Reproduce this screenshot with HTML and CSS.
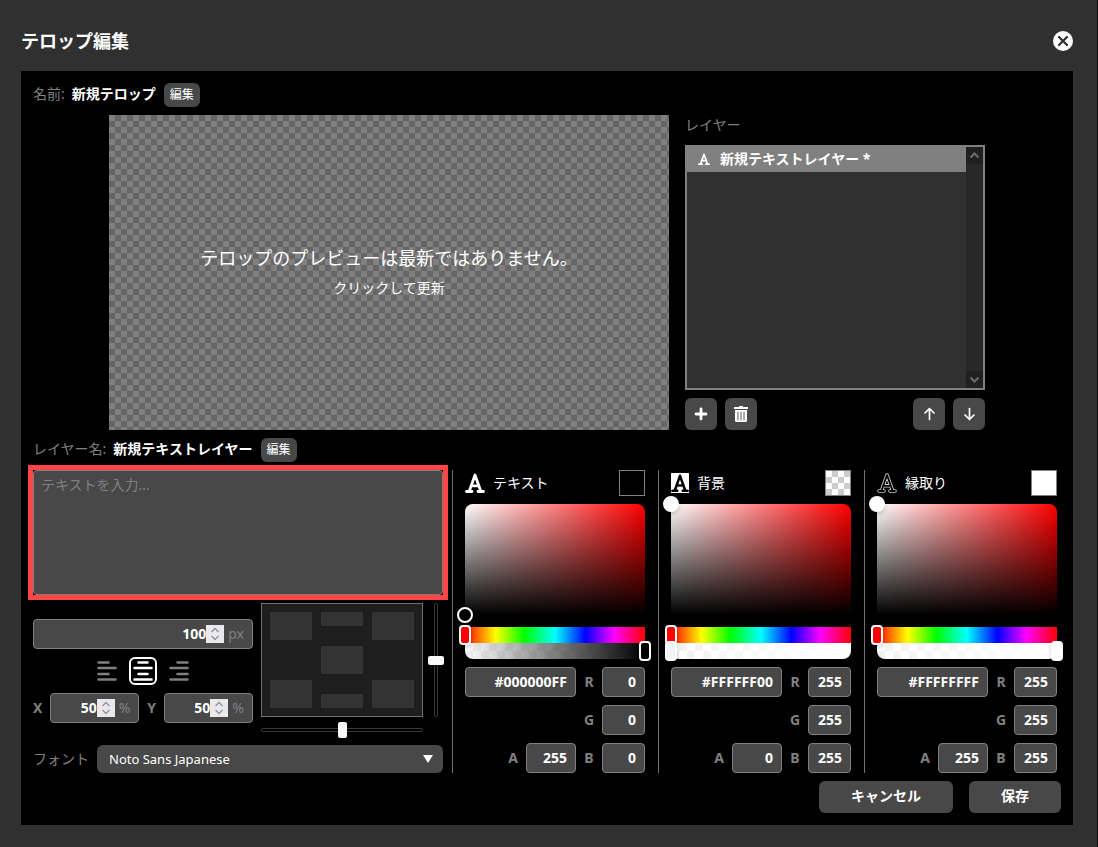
FILE: index.html
```html
<!DOCTYPE html>
<html lang="ja">
<head>
<meta charset="utf-8">
<meta name="viewport" content="width=device-width, initial-scale=1">
<title>テロップ編集</title>
<link rel="stylesheet" href="styles.css">
</head>
<body>
<svg class="defs" aria-hidden="true">
  <symbol id="letter" viewBox="0 0 20 20"><path d="M4.500 17.500 10 2 15.500 17.500M6 12.800h8M1.500 18.500h5.500M13 18.500h5.500" fill="none" stroke="currentColor" stroke-width="2.800" stroke-linecap="round" stroke-linejoin="round"/></symbol>
  <symbol id="letter-outline" viewBox="0 0 20 20"><g fill="none" stroke-linecap="round" stroke-linejoin="round"><path d="M4.500 17.500 10 2 15.500 17.500M6 12.800h8M2 18h5M13 18h5" stroke="#ccc" stroke-width="3.600"/><path d="M4.500 17.500 10 2 15.500 17.500M6 12.800h8M2 18h5M13 18h5" stroke="#000" stroke-width="1.800"/></g></symbol>
  <symbol id="spin" viewBox="0 0 18 18"><path d="M5.500 7 9 3.500 12.500 7M5.500 11 9 14.500 12.500 11" fill="none" stroke="#8f8f9d" stroke-width="1.300"/></symbol>
</svg>
<main class="dialog">
  <header class="dialog-head">
    <h1>テロップ編集</h1>
    <button class="close" aria-label="閉じる"><svg viewBox="0 0 20 20"><circle cx="10" cy="10" r="10" fill="#fff"/><path d="M6 6l8 8M14 6l-8 8" stroke="#303030" stroke-width="2.200" stroke-linecap="round"/></svg></button>
  </header>
  <div class="panel">
    <div class="name-row"><span class="muted">名前:</span><strong>新規テロップ</strong><button class="edit">編集</button></div>
    <section class="stage">
      <button class="preview"><span class="preview-title">テロップのプレビューは最新ではありません。</span><span>クリックして更新</span></button>
      <div class="layers">
        <h2 class="muted">レイヤー</h2>
        <div class="layer-list">
          <ul><li><svg class="layer-icon"><use href="#letter"/></svg>新規テキストレイヤー *</li></ul>
          <div class="scrollbar">
            <button aria-label="上へスクロール"><svg viewBox="0 0 17 17"><path d="M4.500 10.500l4-4 4 4"/></svg></button>
            <button aria-label="下へスクロール"><svg viewBox="0 0 17 17"><path d="M4.500 6.500l4 4 4-4"/></svg></button>
          </div>
        </div>
        <div class="layer-tools">
          <button aria-label="追加"><svg viewBox="0 0 32 32"><path d="M16 11v10M11 16h10" stroke-width="2.800"/></svg></button>
          <button aria-label="削除"><svg viewBox="0 0 32 32"><path d="M9 10h14M14 9h4" stroke-width="2" stroke-linecap="butt"/><path d="M10 12h12v10.500q0 1.500-1.500 1.500h-9q-1.500 0-1.500-1.500z" fill="#fff" stroke="none"/><path d="M13 14v8M16 14v8M19 14v8" stroke="#777" stroke-width="1.200"/></svg></button>
          <span class="spacer"></span>
          <button aria-label="上へ移動"><svg viewBox="0 0 32 32"><path d="M16.500 21.500v-11M12 15l4.500-4.500 4.500 4.500" stroke-width="1.700"/></svg></button>
          <button aria-label="下へ移動"><svg viewBox="0 0 32 32"><path d="M16.500 10.500v11M12 17l4.500 4.500 4.500-4.500" stroke-width="1.700"/></svg></button>
        </div>
      </div>
    </section>
    <div class="name-row"><span class="muted">レイヤー名:</span><strong>新規テキストレイヤー</strong><button class="edit">編集</button></div>
    <section class="editor">
      <div class="text-side">
        <div class="text-frame"><textarea aria-label="テキスト" placeholder="テキストを入力..."></textarea></div>
        <div class="placement">
          <div class="metrics">
            <div class="field"><input aria-label="文字サイズ" value="100"><svg class="spin"><use href="#spin"/></svg><span>px</span></div>
            <div class="aligns">
              <button aria-label="左揃え"><svg viewBox="0 0 20 20"><path d="M1.500 1.500h10M1.500 7h17M1.500 13h10M1.500 18.500h17"/></svg></button>
              <button class="active" aria-label="中央揃え"><svg viewBox="0 0 20 20"><path d="M5.500 1.500h9M1.500 7h17M5.500 13h9M1.500 18.500h17"/></svg></button>
              <button aria-label="右揃え"><svg viewBox="0 0 20 20"><path d="M8.500 1.500h10M1.500 7h17M8.500 13h10M1.500 18.500h17"/></svg></button>
            </div>
            <div class="coords">
              <label for="px">X</label><div class="field"><input id="px" value="50"><svg class="spin"><use href="#spin"/></svg><span>%</span></div>
              <label for="py">Y</label><div class="field"><input id="py" value="50"><svg class="spin"><use href="#spin"/></svg><span>%</span></div>
            </div>
          </div>
          <div class="position">
            <div class="anchors">
              <button aria-label="左上"></button><button class="half" aria-label="上"></button><button aria-label="右上"></button>
              <button class="middle" aria-label="中央"></button>
              <button aria-label="左下"></button><button class="half low" aria-label="下"></button><button aria-label="右下"></button>
            </div>
            <input class="slider vertical" type="range" aria-label="縦位置" value="50">
            <input class="slider" type="range" aria-label="横位置" value="50">
          </div>
        </div>
        <div class="font-row"><label class="muted" for="font">フォント</label><div class="select"><select id="font"><option>Noto Sans Japanese</option></select><svg viewBox="0 0 12 10"><path d="M1 1h10L6 9z" fill="#fff"/></svg></div></div>
      </div>

      <fieldset class="color">
        <div class="color-head"><svg class="letter"><use href="#letter"/></svg><span>テキスト</span><i class="swatch"></i></div>
        <div class="picker black">
          <div class="saturation"><i class="pointer"></i></div>
          <div class="hue"><input type="range" aria-label="色相" max="360" value="0"></div>
          <div class="alpha"><input type="range" aria-label="不透明度" value="100"></div>
        </div>
        <div class="values">
          <input class="hex" aria-label="カラーコード" value="#000000FF"><label for="r1">R</label><input id="r1" value="0">
          <label class="g" for="g1">G</label><input id="g1" value="0">
          <div class="a"><label for="a1">A</label><input id="a1" value="255"></div><label for="b1">B</label><input id="b1" value="0">
        </div>
      </fieldset>

      <fieldset class="color">
        <div class="color-head"><svg class="letter boxed"><use href="#letter"/></svg><span>背景</span><i class="swatch clear"></i></div>
        <div class="picker">
          <div class="saturation"><i class="pointer"></i></div>
          <div class="hue"><input type="range" aria-label="色相" max="360" value="0"></div>
          <div class="alpha"><input class="faint" type="range" aria-label="不透明度" value="0"></div>
        </div>
        <div class="values">
          <input class="hex" aria-label="カラーコード" value="#FFFFFF00"><label for="r2">R</label><input id="r2" value="255">
          <label class="g" for="g2">G</label><input id="g2" value="255">
          <div class="a"><label for="a2">A</label><input id="a2" value="0"></div><label for="b2">B</label><input id="b2" value="255">
        </div>
      </fieldset>

      <fieldset class="color">
        <div class="color-head"><svg class="letter"><use href="#letter-outline"/></svg><span>縁取り</span><i class="swatch white"></i></div>
        <div class="picker">
          <div class="saturation"><i class="pointer"></i></div>
          <div class="hue"><input type="range" aria-label="色相" max="360" value="0"></div>
          <div class="alpha"><input type="range" aria-label="不透明度" value="100"></div>
        </div>
        <div class="values">
          <input class="hex" aria-label="カラーコード" value="#FFFFFFFF"><label for="r3">R</label><input id="r3" value="255">
          <label class="g" for="g3">G</label><input id="g3" value="255">
          <div class="a"><label for="a3">A</label><input id="a3" value="255"></div><label for="b3">B</label><input id="b3" value="255">
        </div>
      </fieldset>
    </section>
    <footer class="actions"><button class="cancel">キャンセル</button><button class="save">保存</button></footer>
  </div>
</main>
</body>
</html>
```
FILE: styles.css
```css
* { box-sizing: border-box; }
body {
  margin: 0;
  min-height: 100vh;
  background: #303030;
  color: #fff;
  font: 14px/20px "Noto Sans", "Noto Sans CJK JP", sans-serif;
}
button, input, textarea, select { font: inherit; color: inherit; margin: 0; }
button { border: 0; padding: 0; background: #484848; cursor: pointer; }
svg { display: block; flex: none; }
.defs { position: absolute; width: 0; height: 0; }
.muted { color: #808080; font-weight: 400; }

.dialog {
  min-height: 100vh;
  padding: 0 24px 22px 21px;
  border-right: 1px solid #101010;
}
.dialog-head {
  display: flex;
  align-items: center;
  justify-content: space-between;
  height: 71px;
  padding-top: 11px;
}
h1 { margin: 0; font-size: 18px; line-height: 24px; }
.close { width: 20px; height: 20px; background: none; }
.panel { padding: 12px; background: #000; }

.name-row { display: flex; align-items: center; height: 24px; }
.name-row span, .name-row strong { padding-bottom: 2px; }
.name-row strong { margin: 0 8px 0 7px; }
.edit {
  height: 24px;
  padding: 0 6px;
  border-radius: 6px;
  font-size: 12px;
}

.stage {
  display: flex;
  justify-content: center;
  gap: 16px;
  margin: 8px 0;
}
.preview {
  display: flex;
  flex-direction: column;
  align-items: center;
  justify-content: center;
  gap: 8px;
  width: 560px;
  padding-bottom: 2px;
  aspect-ratio: 16 / 9;
  background: repeating-conic-gradient(#666 0 25%, #808080 0 50%) 0 0 / 12px 12px;
}
.preview-title { font-size: 18px; line-height: 24px; }
.layers { display: flex; flex-direction: column; width: 300px; }
.layers h2 { margin: 0; padding-bottom: 10px; font-size: 14px; line-height: 20px; }
.layer-list {
  display: flex;
  flex: 1;
  border: 2px solid #808080;
  background: #303030;
}
.layer-list ul { flex: 1; margin: 0; padding: 0; list-style: none; }
.layer-list li {
  display: flex;
  align-items: center;
  gap: 10px;
  height: 25px;
  padding: 0 0 2px 11px;
  background: #808080;
  font-weight: 700;
}
.layer-icon { width: 12px; height: 14px; }
.scrollbar {
  display: flex;
  flex-direction: column;
  justify-content: space-between;
  width: 17px;
  background: #282828;
}
.scrollbar button { height: 17px; background: #202022; }
.scrollbar svg { fill: none; stroke: #6c6c6c; stroke-width: 2; }
.layer-tools { display: flex; gap: 8px; padding-top: 8px; }
.layer-tools button { width: 32px; height: 32px; border-radius: 6px; }
.layer-tools svg { fill: none; stroke: #fff; stroke-linecap: round; stroke-linejoin: round; }
.spacer { flex: 1; }

.editor { display: flex; gap: 13px; margin-top: 8px; padding-right: 4px; }
.text-side {
  display: flex;
  flex: 1;
  flex-direction: column;
  min-width: 0;
  margin-right: -4px;
}
.text-frame { display: flex; flex: 1; outline: 5px solid #ff4545; }
textarea {
  flex: 1;
  min-width: 0;
  padding: 4px 7px;
  border: 1px solid #808080;
  border-radius: 4px;
  background: #484848;
  resize: none;
}
textarea::placeholder { color: #808080; }
.placement { display: flex; gap: 8px; margin: 8px 0 7px; }
.metrics {
  display: flex;
  flex: 1;
  flex-direction: column;
  justify-content: center;
  gap: 8px;
  min-width: 0;
}
.field {
  display: flex;
  flex: 1;
  align-items: center;
  min-width: 0;
  height: 30px;
  padding-right: 8px;
  border: 1px solid #808080;
  border-radius: 4px;
  background: #484848;
}
.metrics > .field { flex: none; }
.field input {
  flex: 1;
  width: 0;
  padding: 0;
  border: 0;
  background: none;
  font-weight: 700;
  text-align: right;
}
.field span { padding-left: 4px; color: #808080; }
.spin { width: 18px; height: 18px; background: #e9e9ed; }
.aligns { display: flex; justify-content: center; gap: 8px; }
.aligns button {
  display: grid;
  place-items: center;
  width: 28px;
  height: 28px;
  border-radius: 6px;
  background: none;
}
.aligns svg { width: 20px; height: 20px; fill: none; stroke: #808080; stroke-width: 2.500; stroke-linecap: round; }
.aligns .active { border: 2px solid #fff; }
.aligns .active svg { stroke: #fff; }
.coords { display: flex; align-items: center; gap: 8px; }
.coords label, .values label { color: #808080; font-weight: 700; }

.position { display: grid; grid-template-columns: 162px 20px; row-gap: 5px; }
.anchors {
  display: grid;
  grid-template-columns: repeat(3, 1fr);
  grid-auto-rows: 28px;
  gap: 6px 9px;
  padding: 8px;
  border: 1px solid #707070;
  background: #1e1e1e;
}
.anchors button { background: #333; }
.anchors .middle { grid-column: 2; }
.anchors .half { height: 14px; }
.anchors .low { align-self: end; }
.anchors .middle + button { grid-column: 1; }
.slider { appearance: none; width: 100%; height: 16px; background: none; }
.slider::-webkit-slider-runnable-track {
  height: 4px;
  border: 1px solid #383838;
  border-radius: 2px;
}
.slider::-webkit-slider-thumb {
  appearance: none;
  width: 9px;
  height: 16px;
  margin-top: -7px;
  border-radius: 2px;
  background: #f8f8f8;
}
.vertical { writing-mode: vertical-lr; width: 16px; height: 0; min-height: 100%; margin-left: 5px; }
.vertical::-webkit-slider-runnable-track { width: 4px; height: auto; }
.vertical::-webkit-slider-thumb { width: 16px; height: 9px; margin: 0 0 0 -7px; }

.font-row { display: flex; align-items: center; gap: 8px; }
.select { display: grid; flex: 1; align-items: center; }
.select > * { grid-area: 1 / 1; }
.select select {
  appearance: none;
  height: 28px;
  padding: 0 12px;
  border: 0;
  border-radius: 6px;
  background: #484848;
  font-size: 13px;
}
.select svg { justify-self: end; width: 12px; height: 10px; margin-right: 9px; pointer-events: none; }

.color {
  width: 193px;
  margin: 0;
  padding: 0 0 0 12px;
  border: 0;
  border-left: 1px solid #707070;
}
.color-head { display: flex; align-items: center; gap: 8px; margin-bottom: 8px; }
.letter { width: 20px; height: 20px; }
.boxed { width: 18px; background: #fff; color: #000; }
.swatch { width: 26px; height: 26px; margin-left: auto; border: 1px solid #808080; background: #000; }
.clear { background: repeating-conic-gradient(#ccc 0 25%, #fff 0 50%) 0 0 / 12px 12px; }
.white { background: #fff; }
.saturation {
  position: relative;
  height: 123px;
  border-bottom: 12px solid #000;
  border-radius: 8px 8px 0 0;
  background: linear-gradient(to top, #000, transparent), linear-gradient(to right, #fff, transparent) red;
}
.pointer {
  position: absolute;
  top: -8px;
  left: -8px;
  width: 16px;
  height: 16px;
  border: 2px solid #fff;
  border-radius: 50%;
  background: #fff;
  box-shadow: 0 2px 4px rgba(0, 0, 0, .2);
}
.black .pointer { top: auto; bottom: -8px; background: #000; }
.hue, .alpha { display: flex; height: 16px; }
.hue { background: linear-gradient(to right, red, #ff0 17%, lime 33%, cyan 50%, blue 67%, #f0f 83%, red); }
.alpha {
  border-radius: 0 0 8px 8px;
  background: linear-gradient(to right, rgba(255, 255, 255, 0), #fff), repeating-conic-gradient(#f2f2f2 0 25%, #fff 0 50%) 0 0 / 16px 16px;
}
.black .alpha {
  background: linear-gradient(to right, rgba(0, 0, 0, 0), #000), repeating-conic-gradient(#f2f2f2 0 25%, #fff 0 50%) 0 0 / 16px 16px;
}
.picker input { appearance: none; flex: 1; min-width: 0; height: 20px; margin: -2px -6px; background: none; z-index: 1; }
.picker input::-webkit-slider-thumb {
  appearance: none;
  width: 12px;
  height: 20px;
  border: 2px solid #fff;
  border-radius: 4px;
  background: red;
  box-shadow: 0 2px 4px rgba(0, 0, 0, .2);
}
.picker .alpha input::-webkit-slider-thumb { background: #fff; }
.picker .alpha .faint::-webkit-slider-thumb { background: #f4f4f4; }
.black .alpha input::-webkit-slider-thumb { background: #000; }
.values {
  display: grid;
  grid-template-columns: 1fr 10px 43px;
  align-items: center;
  gap: 8px;
  margin-top: 8px;
}
.values label { text-align: center; }
.values input {
  width: 100%;
  min-width: 0;
  height: 30px;
  padding: 0 8px 2px;
  border: 1px solid #808080;
  border-radius: 4px;
  background: #484848;
  font-weight: 700;
  text-align: right;
}
.values .g { grid-column: 2; }
.a { display: flex; align-items: center; justify-content: flex-end; gap: 8px; }
.values .a input { width: 50px; }

.actions { display: flex; justify-content: flex-end; gap: 16px; margin-top: 8px; }
.actions button { height: 32px; padding: 0 32px 2px; border-radius: 6px; font-weight: 700; }
```
